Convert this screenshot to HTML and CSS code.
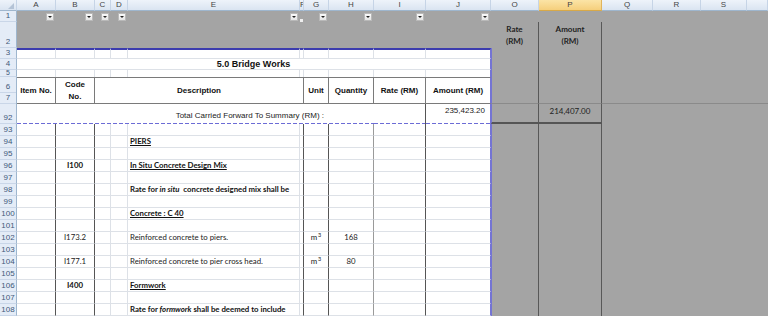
FILE: index.html
```html
<!DOCTYPE html>
<html lang="en-GB">
<head>
<meta charset="utf-8">
<link rel="stylesheet" href="styles.css">
</head>
<body>
<div class="sheet">
    <div class="row hrow">
        <div class="ch corner"></div>
        <div class="ch">A</div><div class="ch">B</div><div class="ch">C</div><div class="ch">D</div>
        <div class="ch">E</div><div class="ch">F</div><div class="ch">G</div><div class="ch">H</div>
        <div class="ch">I</div><div class="ch">J</div><div class="ch">O</div><div class="ch sel">P</div>
        <div class="ch">Q</div><div class="ch">R</div><div class="ch">S</div><div class="ch"></div>
    </div>
    <div class="row r1">
        <div class="rh">1</div>
        <div class="gy flt"><span class="dd"></span></div>
        <div class="gy flt"><span class="dd"></span></div>
        <div class="gy flt"><span class="dd"></span></div>
        <div class="gy flt"><span class="dd"></span></div>
        <div class="gy flt"><span class="dd"></span></div>
        <div class="gy fcol"><span class="fdot"></span></div>
        <div class="gy flt"><span class="dd"></span></div>
        <div class="gy flt"><span class="dd"></span></div>
        <div class="gy flt"><span class="dd"></span></div>
        <div class="gy flt"><span class="dd"></span></div>
        <div class="gy s6"></div>
    </div>
    <div class="row r2">
        <div class="rh">2</div>
        <div class="gy s10"></div>
        <div class="o oph"><span>Rate</span><span>(RM)</span></div>
        <div class="p oph"><span>Amount</span><span>(RM)</span></div>
        <div class="gy s4"></div>
    </div>
    <div class="row r3">
        <div class="rh">3</div>
        <div class="w"></div><div class="w"></div><div class="w"></div><div class="w"></div><div class="w"></div>
        <div class="w"></div><div class="w"></div><div class="w"></div><div class="w"></div><div class="w pj"></div>
        <div class="o pa"></div><div class="p"></div><div class="gy s4"></div>
    </div>
    <div class="row r4">
        <div class="rh">4</div>
        <div class="title s10">5.0 Bridge Works</div>
        <div class="o pa"></div><div class="p"></div><div class="gy s4"></div>
    </div>
    <div class="row r5">
        <div class="rh small">5</div>
        <div class="w"></div><div class="w"></div><div class="w"></div><div class="w"></div><div class="w"></div>
        <div class="w"></div><div class="w"></div><div class="w"></div><div class="w"></div><div class="w pj"></div>
        <div class="o pa"></div><div class="p"></div><div class="gy s4"></div>
    </div>
    <div class="row r67">
        <div class="rh two"><span>6</span><span>7</span></div>
        <div class="hd">Item No.</div>
        <div class="hd">Code<br>No.</div>
        <div class="hd s4">Description</div>
        <div class="hd">Unit</div>
        <div class="hd">Quantity</div>
        <div class="hd">Rate (RM)</div>
        <div class="hd pj">Amount (RM)</div>
        <div class="o pa"></div><div class="p"></div><div class="gy s4"></div>
    </div>
    <div class="row r92">
        <div class="rh">92</div>
        <div class="pb tot s7">Total Carried Forward To Summary (RM) :</div>
        <div class="pb"></div>
        <div class="pb dr"></div>
        <div class="pb pj num">235,423.20</div>
        <div class="o pa"></div>
        <div class="p cnum">214,407.00</div>
        <div class="gy s4"></div>
    </div>

    <div class="row rb"><div class="rh">93</div><div class="w dr"></div><div class="w dr"></div><div class="w"></div><div class="w"></div><div class="w"></div><div class="w dr"></div><div class="w dr"></div><div class="w mr"></div><div class="w dr"></div><div class="w pj"></div><div class="o pa"></div><div class="p"></div><div class="gy s4"></div></div>
    <div class="row rb"><div class="rh">94</div><div class="w dr"></div><div class="w dr"></div><div class="w"></div><div class="w"></div><div class="w tx"><b class="u">PIERS</b></div><div class="w dr"></div><div class="w dr"></div><div class="w mr"></div><div class="w dr"></div><div class="w pj"></div><div class="o pa"></div><div class="p"></div><div class="gy s4"></div></div>
    <div class="row rb"><div class="rh">95</div><div class="w dr"></div><div class="w dr"></div><div class="w"></div><div class="w"></div><div class="w"></div><div class="w dr"></div><div class="w dr"></div><div class="w mr"></div><div class="w dr"></div><div class="w pj"></div><div class="o pa"></div><div class="p"></div><div class="gy s4"></div></div>
    <div class="row rb"><div class="rh">96</div><div class="w dr"></div><div class="w dr tc"><b>I100</b></div><div class="w"></div><div class="w"></div><div class="w tx"><b class="u">In Situ Concrete Design Mix</b></div><div class="w dr"></div><div class="w dr"></div><div class="w mr"></div><div class="w dr"></div><div class="w pj"></div><div class="o pa"></div><div class="p"></div><div class="gy s4"></div></div>
    <div class="row rb"><div class="rh">97</div><div class="w dr"></div><div class="w dr"></div><div class="w"></div><div class="w"></div><div class="w"></div><div class="w dr"></div><div class="w dr"></div><div class="w mr"></div><div class="w dr"></div><div class="w pj"></div><div class="o pa"></div><div class="p"></div><div class="gy s4"></div></div>
    <div class="row rb"><div class="rh">98</div><div class="w dr"></div><div class="w dr"></div><div class="w"></div><div class="w"></div><div class="w tx"><b>Rate for <i>in situ</i>&nbsp; concrete designed mix shall be</b></div><div class="w dr"></div><div class="w dr"></div><div class="w mr"></div><div class="w dr"></div><div class="w pj"></div><div class="o pa"></div><div class="p"></div><div class="gy s4"></div></div>
    <div class="row rb"><div class="rh">99</div><div class="w dr"></div><div class="w dr"></div><div class="w"></div><div class="w"></div><div class="w"></div><div class="w dr"></div><div class="w dr"></div><div class="w mr"></div><div class="w dr"></div><div class="w pj"></div><div class="o pa"></div><div class="p"></div><div class="gy s4"></div></div>
    <div class="row rb"><div class="rh">100</div><div class="w dr"></div><div class="w dr"></div><div class="w"></div><div class="w"></div><div class="w tx"><b class="u">Concrete : C 40</b></div><div class="w dr"></div><div class="w dr"></div><div class="w mr"></div><div class="w dr"></div><div class="w pj"></div><div class="o pa"></div><div class="p"></div><div class="gy s4"></div></div>
    <div class="row rb"><div class="rh">101</div><div class="w dr"></div><div class="w dr"></div><div class="w"></div><div class="w"></div><div class="w"></div><div class="w dr"></div><div class="w dr"></div><div class="w mr"></div><div class="w dr"></div><div class="w pj"></div><div class="o pa"></div><div class="p"></div><div class="gy s4"></div></div>
    <div class="row rb"><div class="rh">102</div><div class="w dr"></div><div class="w dr tc">I173.2</div><div class="w"></div><div class="w"></div><div class="w tx">Reinforced concrete to piers.</div><div class="w dr"></div><div class="w dr tc">m<span class="sup">3</span></div><div class="w mr tc">168</div><div class="w dr"></div><div class="w pj"></div><div class="o pa"></div><div class="p"></div><div class="gy s4"></div></div>
    <div class="row rb"><div class="rh">103</div><div class="w dr"></div><div class="w dr"></div><div class="w"></div><div class="w"></div><div class="w"></div><div class="w dr"></div><div class="w dr"></div><div class="w mr"></div><div class="w dr"></div><div class="w pj"></div><div class="o pa"></div><div class="p"></div><div class="gy s4"></div></div>
    <div class="row rb"><div class="rh">104</div><div class="w dr"></div><div class="w dr tc">I177.1</div><div class="w"></div><div class="w"></div><div class="w tx">Reinforced concrete to pier cross head.</div><div class="w dr"></div><div class="w dr tc">m<span class="sup">3</span></div><div class="w mr tc">80</div><div class="w dr"></div><div class="w pj"></div><div class="o pa"></div><div class="p"></div><div class="gy s4"></div></div>
    <div class="row rb"><div class="rh">105</div><div class="w dr"></div><div class="w dr"></div><div class="w"></div><div class="w"></div><div class="w"></div><div class="w dr"></div><div class="w dr"></div><div class="w mr"></div><div class="w dr"></div><div class="w pj"></div><div class="o pa"></div><div class="p"></div><div class="gy s4"></div></div>
    <div class="row rb"><div class="rh">106</div><div class="w dr"></div><div class="w dr tc"><b>I400</b></div><div class="w"></div><div class="w"></div><div class="w tx"><b class="u">Formwork</b></div><div class="w dr"></div><div class="w dr"></div><div class="w mr"></div><div class="w dr"></div><div class="w pj"></div><div class="o pa"></div><div class="p"></div><div class="gy s4"></div></div>
    <div class="row rb"><div class="rh">107</div><div class="w dr"></div><div class="w dr"></div><div class="w"></div><div class="w"></div><div class="w"></div><div class="w dr"></div><div class="w dr"></div><div class="w mr"></div><div class="w dr"></div><div class="w pj"></div><div class="o pa"></div><div class="p"></div><div class="gy s4"></div></div>
    <div class="row rb"><div class="rh">108</div><div class="w dr"></div><div class="w dr"></div><div class="w"></div><div class="w"></div><div class="w tx"><b>Rate for <i>formwork</i> shall be deemed to include</b></div><div class="w dr"></div><div class="w dr"></div><div class="w mr"></div><div class="w dr"></div><div class="w pj"></div><div class="o pa"></div><div class="p"></div><div class="gy s4"></div></div>
</div>
</body>
</html>
```

FILE: styles.css
```css
*{
    box-sizing: border-box;
}
body{
    margin: 0;
    background: #a4a4a4;
    font-family: "Liberation Sans", Arial, sans-serif;
    color: #111;
}
.sheet{
    width: 768px;
    height: 316px;
    overflow: hidden;
    display: flex;
    flex-direction: column;
}
/* A..J then the hidden K-N, then O P Q R S T */
.row{
    display: grid;
    grid-template-columns: 17px 39px 39px 16px 17px 172px 4px 25px 45px 52px 65px 48px 63px 51px 48px 46px 1fr;
    flex: none;
}
.row > div{
    min-width: 0;
    overflow: hidden;
    white-space: nowrap;
}
.hrow{ height: 11px; }
.r1{ height: 11px; }
.r2{ height: 26px; }
.r3, .r4{ height: 11px; }
.r5{ height: 7px; }
.r67{ height: 27px; }
.r92{ height: 20px; }
.rb{ height: 12px; }

.s4{ grid-column: span 4; }
.s6{ grid-column: span 6; }
.s7{ grid-column: span 7; }
.s10{ grid-column: span 10; }

/* column letters */
.ch{
    background: linear-gradient(#eef3fa, #dae4f1);
    border-right: 1px solid #c6d4e6;
    border-bottom: 1px solid #9eb6ce;
    font-size: 8px;
    line-height: 10px;
    text-align: center;
    color: #444;
}
.ch.sel{
    background: linear-gradient(#fbe4a6, #f5cf7c);
    border-right-color: #e0b45c;
    border-bottom-color: #d8a948;
}
.corner{
    position: relative;
}
.corner::after{
    content: "";
    position: absolute;
    right: 2px;
    bottom: 1px;
    border-left: 6px solid transparent;
    border-bottom: 6px solid #b4c3d6;
}

/* row numbers */
.rh{
    background: #e4ecf7;
    border-right: 1px solid #9eb6ce;
    border-bottom: 1px solid #c9d6e8;
    font-size: 8px;
    line-height: 9px;
    color: #41597a;
    display: flex;
    justify-content: center;
    align-items: flex-end;
    padding-bottom: 1px;
}
.rh.small{
    font-size: 7px;
    line-height: 6px;
    padding-bottom: 0;
}
.rh.two{
    flex-direction: column;
    align-items: stretch;
    padding: 0;
    border-bottom: 0;
}
.rh.two span{
    display: flex;
    justify-content: center;
    align-items: flex-end;
    padding-bottom: 1px;
    border-bottom: 1px solid #c9d6e8;
}
.rh.two span:first-child{ height: 16px; }
.rh.two span:last-child{ height: 11px; }

.gy{
    background: #a4a4a4;
}

/* filter arrows on row 1 */
.flt{
    display: flex;
    justify-content: flex-end;
    align-items: center;
    padding-right: 2px;
}
.dd{
    width: 8px;
    height: 8px;
    background: linear-gradient(#fbfbfb, #e4e4e4);
    border: 1px solid #b9b9b9;
    display: flex;
    align-items: center;
    justify-content: center;
}
.dd::after{
    content: "";
    border-left: 2px solid transparent;
    border-right: 2px solid transparent;
    border-top: 2px solid #222;
}
.fcol{
    display: flex;
    align-items: flex-end;
}
.fdot{
    width: 3px;
    height: 3px;
    background: #eee;
}

/* print area cells */
.w{
    background: #fff;
    border-right: 1px solid #dde1e7;
    border-bottom: 1px solid #dde1e7;
}
.dr{ border-right-color: #555; }
.mr{ border-right-color: #9a9a9a; }
.pj{ border-right: 1px solid #7474d4; }
.r3 .w{ border-top: 2px solid #3c3cae; }
.r5 .w{ border-bottom: 0; }

.title{
    background: #fff;
    border-right: 1px solid #7474d4;
    border-bottom: 1px solid #dde1e7;
    font-weight: bold;
    font-size: 9px;
    line-height: 11px;
    text-align: center;
}
.hd{
    background: #fff;
    border-top: 1px solid #7a7a7a;
    border-bottom: 1px solid #7a7a7a;
    border-right: 1px solid #7a7a7a;
    font-weight: bold;
    font-size: 8px;
    line-height: 12px;
    display: flex;
    align-items: center;
    justify-content: center;
    text-align: center;
}
.hd.pj{ border-right-color: #7474d4; }

.pb{
    background: linear-gradient(90deg, #6c6cd6 4px, transparent 4px) 0 100% / 6px 1px repeat-x, #fff;
    font-size: 8px;
}
.pb.dr{ border-right: 1px solid #555; }
.tot{
    display: flex;
    justify-content: flex-end;
    align-items: flex-end;
    padding: 0 5px 4px 0;
    color: #222;
}
.num{
    text-align: right;
    padding: 2px 5px 0 0;
    color: #222;
}

/* the O and P columns outside the print area */
.o, .p{
    background: #a4a4a4;
    border-right: 1px solid #585858;
}
.pa{ border-left: 1px solid #7474d4; }
.oph{
    font-family: Lato, "Liberation Sans", sans-serif;
    font-weight: bold;
    font-size: 8px;
    line-height: 12px;
    display: flex;
    flex-direction: column;
    align-items: center;
    padding-top: 1px;
    color: #222;
}
.r67 .o, .r67 .p, .r67 .gy{ border-bottom: 1px solid #8a8a8a; }
.r92 .o, .r92 .p{ border-bottom: 2px solid #555; }
.cnum{
    font-family: Lato, "Liberation Sans", sans-serif;
    font-size: 8px;
    text-align: center;
    padding-top: 2px;
    color: #222;
}

/* body text */
.tx, .tc{
    font-family: Lato, "Liberation Sans", sans-serif;
    font-size: 7.8px;
    line-height: 11px;
    color: #222;
    display: flex;
    align-items: center;
}
.tx{ padding-left: 2px; }
.tc{ justify-content: center; }
.tx b, .tc b{ color: #111; }
.u{ text-decoration: underline; }
.sup{
    font-size: 5.5px;
    line-height: 5px;
    align-self: flex-start;
    margin-top: 1px;
    margin-left: 1px;
}
```
